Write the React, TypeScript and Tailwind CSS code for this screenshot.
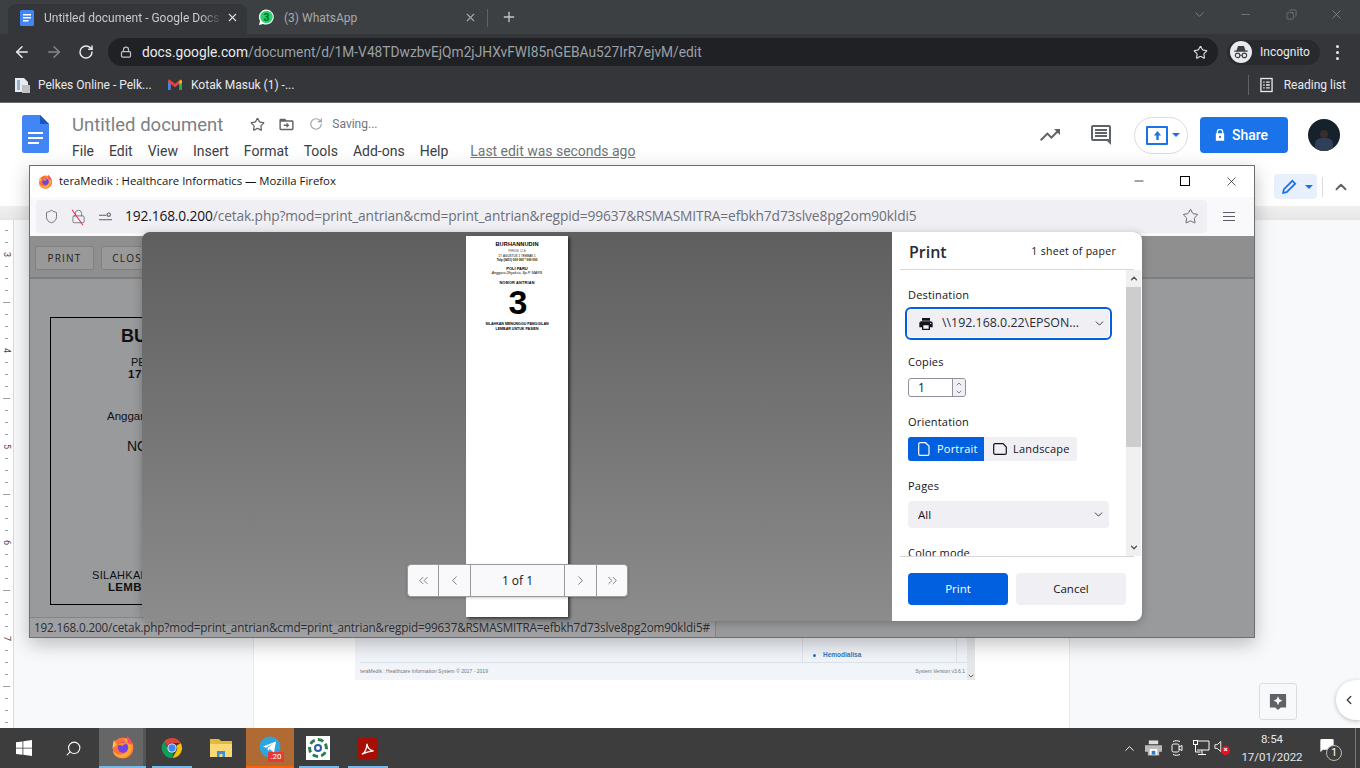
import { ArrowLeft, ArrowRight, RotateCw, Lock, Star, X, Minus, Plus, ChevronDown, ChevronUp, ChevronLeft, ChevronRight, ChevronsLeft, ChevronsRight, Shield, Copy, MessageSquare, Search } from 'lucide-react';

const menus = ['File', 'Edit', 'View', 'Insert', 'Format', 'Tools', 'Add-ons', 'Help'];
const statusUrl = '192.168.0.200/cetak.php?mod=print_antrian&cmd=print_antrian&regpid=99637&RSMASMITRA=efbkh7d73slve8pg2om90kldi5#';
const rulerCells = Array.from({ length: 42 }, (_, i) => i);
const rulerNumbers: Record<number, string> = { 2: '3', 10: '4', 18: '5', 26: '6', 34: '7' };

const DocsIcon = ({ className }: { className?: string }) => (
  <svg viewBox="0 0 27 38" className={className}>
    <path d="M2.5 0H18l9 9v26.5a2.5 2.5 0 0 1-2.5 2.5h-22A2.5 2.5 0 0 1 0 35.5V2.5A2.5 2.5 0 0 1 2.5 0z" fill="#4285f4" />
    <path d="M18 0l9 9h-9z" fill="#1a56c4" />
    <path d="M6 17h15v2H6zM6 22h15v2H6zM6 27h11v2H6z" fill="#fff" />
  </svg>
);

const FirefoxIcon = ({ className }: { className?: string }) => (
  <svg viewBox="0 0 24 24" className={className}>
    <circle cx="12" cy="13" r="10.5" fill="#ff7139" />
    <path d="M21.5 9C22.5 15 18 23 11 23 6 23 2.5 20 1.7 16c3 3 7 4 10.3 3 4-1.2 5.5-5 4.5-8.5-.7-2.5-2.5-5-4-7 3 0 7.5 1.5 9 5.5z" fill="#ffa436" />
    <path d="M16 1c2.500 2 5 5 5.500 9l-5-2z" fill="#ff4f5e" />
    <path d="M3 5C2 8 1.5 10 1.8 13l4-3z" fill="#ffbd4f" />
    <circle cx="12" cy="12.500" r="5.200" fill="#7542e5" />
    <path d="M7 10c2-2.500 6-3 9-1-2-.2-4 .5-4.500 2-.8-.8-2.800-1.200-4.500-1z" fill="#ff980e" />
  </svg>
);

const ChromeIcon = ({ className }: { className?: string }) => (
  <svg viewBox="0 0 24 24" className={className}>
    <path d="M12 1a11 11 0 0 1 9.530 5.500H12a5.500 5.500 0 0 0-5 3.200L3.400 5A11 11 0 0 1 12 1z" fill="#db4437" />
    <path d="M21.530 6.500A11 11 0 0 1 12.500 23l4.400-7.600A5.500 5.500 0 0 0 16.800 9.500z" fill="#f4c20d" />
    <path d="M12.500 23A11 11 0 0 1 3.400 5l4.700 8.500a5.500 5.500 0 0 0 5.500 3z" fill="#0f9d58" />
    <circle cx="12" cy="12" r="5" fill="#fff" />
    <circle cx="12" cy="12" r="4" fill="#4285f4" />
  </svg>
);

const WhatsAppIcon = () => (
  <svg viewBox="0 0 18 18" className="w-[17px] h-[17px] shrink-0">
    <path d="M9 .5a8 8 0 0 0-6.800 12.200L1 17l4.400-1.200A8 8 0 1 0 9 .5z" fill="#fff" />
    <circle cx="9" cy="8.500" r="6.600" fill="#25d366" />
    <text x="9" y="12.500" textAnchor="middle" fontSize="11" fontWeight="700" fill="#063" fontFamily="Roboto, sans-serif">3</text>
  </svg>
);

const TabBar = () => (
  <div className="h-[34px] bg-[#3c4043] flex items-end pl-[8px] shrink-0">
    <div className="w-[239px] h-[30px] bg-[#35363a] rounded-t-[8px] flex items-center pl-[12px] pr-[8px] pb-[3px]">
      <svg viewBox="0 0 14 16" className="w-[14px] h-[16px] shrink-0">
        <rect width="14" height="16" rx="1.5" fill="#4285f4" />
        <path d="M3 4h8v1.500H3zM3 7h8v1.500H3zM3 10h5.500v1.500H3z" fill="#fff" />
      </svg>
      <span className="ml-[10px] text-[12px] text-[#c8cacc] whitespace-nowrap overflow-hidden flex-1 [mask-image:linear-gradient(to_right,black_88%,transparent)]">Untitled document - Google Docs</span>
      <X size={13} strokeWidth={2} className="text-[#dadce0] ml-[4px] shrink-0" />
    </div>
    <div className="w-[235px] h-[30px] flex items-center pl-[11px] pr-[5px] pb-[3px]">
      <WhatsAppIcon />
      <span className="ml-[9px] text-[12px] text-[#a7a9ac]">(3) WhatsApp</span>
      <X size={13} strokeWidth={2} className="text-[#a7a9ac] ml-auto" />
    </div>
    <div className="ml-[5px] mb-[7px] w-px h-[18px] bg-[#5f6368]" />
    <Plus size={16} strokeWidth={2} className="ml-[13px] mb-[9px] text-[#c4c7c9]" />
    <div className="ml-auto flex items-center h-[30px] mb-[5px] text-[#9aa0a6]">
      <ChevronDown size={15} strokeWidth={1} className="mr-[32px]" />
      <Minus size={13} strokeWidth={1} className="mr-[34px]" />
      <Copy size={11} strokeWidth={1} className="mr-[32px] scale-x-[-1]" />
      <X size={15} strokeWidth={1} className="mr-[16px]" />
    </div>
  </div>
);

const Toolbar = () => (
  <div className="h-[34px] bg-[#35363a] flex items-center pt-[2px] shrink-0">
    <ArrowLeft size={18} strokeWidth={2} className="ml-[13px] text-[#e8eaed]" />
    <ArrowRight size={18} strokeWidth={2} className="ml-[14px] text-[#84878a]" />
    <RotateCw size={16} strokeWidth={2.2} className="ml-[15px] text-[#e8eaed]" />
    <div className="ml-[14px] w-[1110px] h-[28px] rounded-full bg-[#202124] flex items-center pl-[12px] pr-[10px]">
      <Lock size={12} strokeWidth={2.5} className="text-[#bdc1c6]" />
      <span className="ml-[10px] text-[13.75px] whitespace-nowrap text-[#e8eaed]">docs.google.com<span className="text-[#9aa0a6]">/document/d/1M-V48TDwzbvEjQm2jJHXvFWI85nGEBAu527IrR7ejvM/edit</span></span>
      <Star size={15} strokeWidth={1.8} className="ml-auto text-[#dadce0]" />
    </div>
    <div className="ml-[9px] w-[93px] h-[25px] rounded-full bg-[#292a2d] flex items-center pl-[3px]">
      <div className="w-[22px] h-[22px] rounded-full bg-[#e8eaed] flex items-center justify-center">
        <svg viewBox="0 0 24 24" className="w-[18px] h-[18px]" fill="#3c4043">
          <path d="M8 4h8l2 6h3v1.500H3V10h3z" />
          <circle cx="7.500" cy="16.500" r="3" fill="none" stroke="#3c4043" strokeWidth="1.5" />
          <circle cx="16.500" cy="16.500" r="3" fill="none" stroke="#3c4043" strokeWidth="1.5" />
          <path d="M10 15.800h4v1.200h-4z" />
        </svg>
      </div>
      <span className="ml-[8px] text-[12px] text-[#e8eaed]">Incognito</span>
    </div>
    <div className="ml-[16px] flex flex-col gap-[3px]">
      <div className="w-[3px] h-[3px] rounded-full bg-[#e8eaed]" />
      <div className="w-[3px] h-[3px] rounded-full bg-[#e8eaed]" />
      <div className="w-[3px] h-[3px] rounded-full bg-[#e8eaed]" />
    </div>
  </div>
);

const Bookmarks = () => (
  <div className="h-[35px] bg-[#35363a] border-b border-[#6b6c6e] flex items-center pl-[14px] pb-[1px] shrink-0">
    <svg viewBox="0 0 16 16" className="w-[16px] h-[16px]">
      <path d="M1 1h9l4 4v10H1z" fill="#e8eaed" />
      <path d="M3 3h3v10H3z" fill="#8ab4d8" />
      <path d="M8 8h8v8H8z" fill="#bdc1c6" />
    </svg>
    <span className="ml-[8px] w-[120px] text-[12px] text-[#e8eaed] whitespace-nowrap">Pelkes Online - Pelk...</span>
    <svg viewBox="0 0 16 12" className="ml-[10px] w-[14px] h-[11px]">
      <path d="M0 1.500L1.500 0 8 5l6.500-5L16 1.500V12h-3V5L8 9 3 5v7H0z" fill="#ea4335" />
      <path d="M0 3v9h3V5z" fill="#4285f4" />
      <path d="M13 5v7h3V3z" fill="#34a853" />
      <path d="M13 1.300L16 1.500V4l-3 2z" fill="#fbbc04" />
    </svg>
    <span className="ml-[9px] text-[12px] text-[#e8eaed] whitespace-nowrap">Kotak Masuk (1) -...</span>
    <div className="ml-auto w-px h-[20px] bg-[#5f6368]" />
    <svg viewBox="0 0 14 16" className="ml-[11px] w-[13px] h-[16px]" fill="none" stroke="#e8eaed" strokeWidth="1.4">
      <rect x="1" y="1" width="12" height="14" />
      <path d="M3.500 5h1.500M6.500 5h4M3.500 8h1.500M6.500 8h4M3.500 11h1.500M6.500 11h4" />
    </svg>
    <span className="ml-[11px] mr-[14px] text-[12px] text-[#e8eaed]">Reading list</span>
  </div>
);

const DocsHeader = () => (
  <div className="h-[64px] bg-white flex items-start pl-[22px] shrink-0">
    <DocsIcon className="w-[27px] h-[38px] mt-[12px]" />
    <div className="ml-[23px] pt-[8px]">
      <div className="flex items-center h-[26px]">
        <span className="text-[18.5px] text-[#7b7f84] pt-[3px]">Untitled document</span>
        <Star size={15} strokeWidth={2} className="ml-[27px] text-[#5f6368]" />
        <svg viewBox="0 0 24 24" className="ml-[13px] w-[17px] h-[17px]" fill="#5f6368">
          <path d="M20 6h-8l-2-2H4a2 2 0 0 0-2 2v12a2 2 0 0 0 2 2h16a2 2 0 0 0 2-2V8a2 2 0 0 0-2-2zm0 12H4V8h16zm-8-1l4-4-4-4v3H8v2h4z" />
        </svg>
        <RotateCw size={14} strokeWidth={2} className="ml-[14px] text-[#9aa0a6]" />
        <span className="ml-[9px] text-[12px] text-[#70757a]">Saving...</span>
      </div>
      <div className="flex items-center h-[24px] mt-[2px] text-[14px] text-[#3c4043]">
        {menus.map((m) => (
          <span key={m} className="mr-[15px]">{m}</span>
        ))}
        <span className="ml-[7px] underline text-[#70757a] tracking-[-0.03px]">Last edit was seconds ago</span>
      </div>
    </div>
    <div className="ml-auto flex items-center mt-[12px] pr-[20px]">
      <svg viewBox="0 0 24 24" className="w-[24px] h-[24px]" fill="#5f6368">
        <path d="M16 6l2.290 2.290-4.880 4.880-4-4L2 16.590 3.410 18l6-6 4 4 6.300-6.290L22 12V6z" />
      </svg>
      <svg viewBox="0 0 24 24" className="ml-[27px] w-[24px] h-[24px]" fill="#5f6368">
        <path d="M21.990 4a2 2 0 0 0-2-2H4a2 2 0 0 0-2 2v12a2 2 0 0 0 2 2h14l4 4zM20 16H4V4h16zM6 12h12v2H6zm0-3h12v2H6zm0-3h12v2H6z" />
      </svg>
      <div className="ml-[21px] w-[54px] h-[37px] rounded-full border border-[#dadce0] flex items-center pl-[11px]">
        <div className="w-[22px] h-[19px] border-[2px] border-[#1a73e8] flex items-center justify-center rounded-[1px]">
          <svg viewBox="0 0 10 10" className="w-[9px] h-[9px]" fill="#1a73e8"><path d="M5 0L9 5H6.300v5H3.700V5H1z" /></svg>
        </div>
        <div className="ml-[4px] border-x-[4px] border-t-[4px] border-x-transparent border-t-[#1a73e8]" />
      </div>
      <div className="ml-[12px] w-[88px] h-[36px] rounded-[4px] bg-[#1a73e8] flex items-center pl-[15px]">
        <svg viewBox="0 0 12 14" className="w-[10px] h-[12px]" fill="#fff"><path d="M2 5V3.500a4 4 0 0 1 8 0V5h1v9H1V5zm1.500 0h5V3.500a2.500 2.500 0 0 0-5 0zM6 8a1.300 1.300 0 1 0 0 2.600A1.300 1.300 0 0 0 6 8z" fillRule="evenodd" /></svg>
        <span className="ml-[7px] text-[14px] font-medium text-white">Share</span>
      </div>
      <div className="ml-[20px] w-[32px] h-[40px] flex items-center justify-center">
        <div className="w-[32px] h-[32px] rounded-full bg-[#15212b] flex flex-col items-center justify-end overflow-hidden">
          <div className="w-[8px] h-[8px] rounded-full bg-[#3a2e2a]" />
          <div className="w-[18px] h-[13px] rounded-t-[6px] bg-[#2f3f57]" />
        </div>
      </div>
    </div>
  </div>
);

const DocsToolbar = () => (
  <div className="h-[39px] bg-white flex items-center justify-end shrink-0 pr-[10px]">
    <div className="w-[43px] h-[25px] rounded-[4px] bg-[#e8f0fe] flex items-center pl-[7px]">
      <svg viewBox="0 0 24 24" className="w-[17px] h-[17px]" fill="none" stroke="#1a73e8" strokeWidth="2.5"><path d="M3 21l1-5L16 4l4 4L8 20z" /></svg>
      <div className="ml-[7px] border-x-[4px] border-t-[4px] border-x-transparent border-t-[#1a73e8]" />
    </div>
    <div className="ml-[5px] w-px h-[20px] bg-[#dadce0]" />
    <ChevronUp size={18} strokeWidth={2.5} className="ml-[9px] text-[#5f6368]" />
  </div>
);

const Ruler = () => (
  <div className="w-[14px] bg-white border-r border-[#dadce0] pt-[4px] overflow-hidden shrink-0">
    {rulerCells.map((i) => (
      <div key={i} className="h-[12px] flex items-center justify-center">
        {rulerNumbers[i] ? (
          <span className="rotate-90 text-[9px] text-[#5f3b3b] leading-none">{rulerNumbers[i]}</span>
        ) : (
          <div className={i % 8 === 6 ? 'w-[7px] h-px bg-[#9aa0a6]' : 'w-[3px] h-px bg-[#9aa0a6]'} />
        )}
      </div>
    ))}
  </div>
);

const DocsCanvas = () => (
  <div className="flex-1 flex flex-col min-h-0">
    <div className="h-[14px] bg-gradient-to-b from-[#f0f0f0] to-[#e6e6e6] shrink-0" />
    <div className="flex-1 flex min-h-0 bg-[#f8f9fa]">
      <Ruler />
      <div className="ml-[239px] w-[817px] bg-white border-x border-[#e8eaed] flex flex-col justify-end pb-[48px] pl-[101px]">
        <div className="w-[620px] h-[42px] bg-[#f1f4f9] flex font-['Liberation_Sans',sans-serif]">
          <div className="w-[612px] flex flex-col">
            <div className="flex-1 ml-[447px] w-[155px] border-x border-[#e0e4ea] flex items-center pl-[10px] pt-[10px]">
              <div className="w-[3px] h-[3px] rounded-full bg-[#2a6db5] mr-[7px]" />
              <span className="text-[6.5px] font-bold text-[#3a78b8]">Hemodialisa</span>
            </div>
            <div className="h-[18px] ml-[5px] border-t border-[#dde1e8] flex items-center justify-between pr-[2px] text-[5px] text-[#777]">
              <span>teraMedik : Healthcare Information System © 2017 - 2019</span>
              <span>System Version v3.6.1</span>
            </div>
          </div>
          <div className="w-[8px] bg-[#e6e7e9] flex flex-col justify-end items-center">
            <ChevronDown size={8} strokeWidth={3} className="text-[#666]" />
          </div>
        </div>
      </div>
      <div className="ml-auto flex flex-col justify-end items-end pb-[8px]">
        <div className="w-[38px] h-[37px] rounded-[3px] border border-[#dadce0] bg-[#f8f9fa] flex items-center justify-center mr-[63px]">
          <svg viewBox="0 0 20 22" className="w-[18px] h-[20px]">
            <path d="M1 2h18v15h-6l-3 3-3-3H1z" fill="#5f6368" />
            <path d="M10 4.500l1.500 3.500 3.500 1.500-3.500 1.500-1.500 3.500-1.500-3.500L5 9.500 8.500 8z" fill="#fff" />
          </svg>
        </div>
      </div>
    </div>
  </div>
);

const Taskbar = () => (
  <div className="h-[40px] bg-[#3d3d3d] shrink-0 flex items-stretch relative">
    <div className="w-[48px] flex items-center justify-center">
      <svg viewBox="0 0 16 16" className="w-[16px] h-[16px]" fill="#fff"><path d="M0 2.300l6.500-.9v6.300H0zM7.300 1.300L16 0v7.700H7.300zM0 8.500h6.500v6.300L0 14zM7.300 8.500H16V16l-8.700-1.200z" /></svg>
    </div>
    <div className="w-[51px] flex items-center justify-center">
      <Search size={17} strokeWidth={1.5} className="text-white scale-x-[-1]" />
    </div>
    <div className="w-[44px] bg-[#666] border-b-[2px] border-[#76b9ed] flex items-center justify-center pl-[4px]">
      <FirefoxIcon className="w-[24px] h-[24px]" />
    </div>
    <div className="w-[3px] bg-[#555] border-b-[2px] border-[#76b9ed]" />
    <div className="w-[6px]" />
    <div className="w-[40px] flex items-center justify-center relative">
      <ChromeIcon className="w-[22px] h-[22px]" />
      <div className="absolute bottom-0 left-0 right-0 h-[2px] bg-[#76b9ed]" />
    </div>
    <div className="w-[7px]" />
    <div className="w-[44px] flex items-center justify-center">
      <svg viewBox="0 0 22 20" className="w-[22px] h-[20px]">
        <path d="M0 1h9l2 2h11v16H0z" fill="#e8b838" />
        <path d="M0 6h22v13H0z" fill="#f9d976" />
        <path d="M7 13h8v6H7z" fill="#3a8fd8" />
        <path d="M9.500 16h3v3h-3z" fill="#f9d976" />
      </svg>
    </div>
    <div className="w-[3px]" />
    <div className="w-[48px] bg-[#b06a33] border-b-[2px] border-[#f7630c] flex items-center justify-center relative">
      <svg viewBox="0 0 22 22" className="w-[22px] h-[22px]">
        <circle cx="11" cy="11" r="10.5" fill="#2ca5e0" />
        <path d="M4 10.500L17 5.500l-2 11-4.500-3.500L9 15l-.5-3 6-4.500L7 11.700z" fill="#fff" />
      </svg>
      <span className="absolute left-[22px] top-[24px] w-[16px] h-[10px] bg-[#e53935] rounded-[1px] text-white text-[8px] leading-[10px] text-center">.20</span>
    </div>
    <div className="w-[48px] flex items-center justify-center relative">
      <div className="w-[24px] h-[24px] bg-white flex items-center justify-center">
        <div className="w-[20px] h-[20px] rounded-full border-[3px] border-dashed border-[#2a7f4f] flex items-center justify-center">
          <div className="w-[8px] h-[8px] rounded-full border-[2px] border-[#2a5db0]" />
        </div>
      </div>
      <div className="absolute bottom-0 left-[5px] right-[3px] h-[2px] bg-[#76b9ed]" />
    </div>
    <div className="w-[50px] flex items-center justify-center relative">
      <div className="w-[21px] h-[21px] rounded-[3px] bg-[#a80f04] flex items-center justify-center">
        <svg viewBox="0 0 16 16" className="w-[15px] h-[15px]" fill="none" stroke="#fff" strokeWidth="1.4"><path d="M2 14c3-1 5-6 5.500-11 .3 4 3 7 7 7.500-4 .2-8 1.500-12.500 3.500z" /></svg>
      </div>
      <div className="absolute bottom-0 left-[6px] right-[4px] h-[2px] bg-[#76b9ed]" />
    </div>

    <div className="ml-auto flex items-center text-white">
      <ChevronUp size={15} strokeWidth={1.5} className="mr-[8px]" />
      <svg viewBox="0 0 18 16" className="w-[17px] h-[16px] mr-[9px]"><path d="M4 0h10v4H4z" fill="#ddd" /><path d="M0 5h18v7h-3v4H3v-4H0z" fill="#bbb" /><path d="M5 9h8v6H5z" fill="#fff" /><path d="M7 11h4v4H7z" fill="#2a7fc8" /></svg>
      <svg viewBox="0 0 12 18" className="w-[12px] h-[18px] mr-[10px]" fill="none" stroke="#fff" strokeWidth="1"><rect x="1" y="5" width="7" height="8" rx="1.5" /><path d="M8 8l3-1.500v5L8 10M2 2.500c2-1 5-1 7 0M2 15.500c2 1 5 1 7 0" /></svg>
      <svg viewBox="0 0 17 16" className="w-[17px] h-[16px] mr-[4px]" fill="none" stroke="#fff" strokeWidth="1"><path d="M4 1h12v9H4M9 10v4M5 14.500h8" /><rect x=".5" y=".5" width="4" height="4" /><path d="M2.500 5v7h5" /></svg>
      <div className="relative w-[14px] h-[16px] mr-[11px]">
        <svg viewBox="0 0 10 14" className="w-[9px] h-[13px]" fill="none" stroke="#fff" strokeWidth="1"><path d="M1 5h2.500L7.500 1.500v11L3.500 9H1z" /></svg>
        <div className="absolute left-[7px] top-[6px] w-[9px] h-[9px] rounded-full bg-[#e81123] text-white text-[8px] leading-[8px] text-center font-bold">×</div>
      </div>
      <div className="w-[66px] flex flex-col items-center text-[11.5px] leading-[18px] text-[#e6e6e6]">
        <span>8:54</span>
        <span className="whitespace-nowrap">17/01/2022</span>
      </div>
      <div className="relative w-[24px] h-[24px] ml-[14px] mr-[17px]">
        <MessageSquare size={16} fill="#fff" strokeWidth={0} className="absolute left-[0px] top-[1px]" />
        <div className="absolute left-[7px] top-[9px] w-[16px] h-[16px] rounded-full bg-[#3d3d3d] border border-[#bbb] text-[11px] leading-[14px] text-center">1</div>
      </div>
    </div>
    <div className="absolute right-[4px] top-0 bottom-0 w-px bg-[#777]" />
  </div>
);

const PrintSidebar = () => (
  <div className="w-[250px] h-full bg-white rounded-r-[8px] flex flex-col shrink-0 text-[12px] text-[#15141a] font-['Open_Sans',sans-serif]">
    <div className="h-[38px] mx-[8px] border-b border-[#d7d7db] flex items-center justify-between pl-[9px] pr-[18px] pt-[2px] shrink-0">
      <span className="text-[16px] font-semibold text-[#2b2a33]">Print</span>
      <span className="text-[10.5px] tracking-[0.3px]">1 sheet of paper</span>
    </div>
    <div className="flex-1 min-h-0 flex">
      <div className="flex-1 min-w-0 overflow-hidden pl-[16px] pt-[17px]">
        <div className="text-[11px] leading-[16px] tracking-[0.2px]">Destination</div>
        <div className="mt-[4px] -ml-[3px] w-[207px] h-[33px] border-[2px] border-[#0060df] rounded-[6px] p-[1px]">
          <div className="h-full bg-[#f0f0f4] rounded-[3px] flex items-center pl-[10px] pr-[3px]">
            <svg viewBox="0 0 24 24" className="w-[16px] h-[16px]" fill="#15141a">
              <path d="M19 8H5c-1.660 0-3 1.340-3 3v6h4v4h12v-4h4v-6c0-1.660-1.340-3-3-3zm-3 11H8v-5h8v5zm3-7c-.55 0-1-.45-1-1s.45-1 1-1 1 .45 1 1-.45 1-1 1zm-1-9H6v4h12V3z" />
            </svg>
            <span className="ml-[8px] text-[12.4px] whitespace-nowrap text-[#2b2a33]">\\192.168.0.22\EPSON...</span>
            <ChevronDown size={13} strokeWidth={1.5} className="ml-auto" />
          </div>
        </div>
        <div className="mt-[14px] text-[11px] leading-[16px] tracking-[0.2px]">Copies</div>
        <div className="mt-[8px] w-[58px] h-[19px] border border-[#8f8f9d] rounded-[3px] flex items-center">
          <span className="ml-[9px] text-[12px] flex-1">1</span>
          <div className="w-[13px] h-full border-l border-[#8f8f9d] bg-[#f0f0f4] flex flex-col items-center justify-center rounded-r-[3px]">
            <ChevronUp size={8} strokeWidth={1.5} />
            <ChevronDown size={8} strokeWidth={1.5} />
          </div>
        </div>
        <div className="mt-[17px] text-[11px] leading-[16px] tracking-[0.2px]">Orientation</div>
        <div className="mt-[7px] w-[169px] h-[24px] rounded-[3px] bg-[#f0f0f4] flex text-[11px] tracking-[0.2px]">
          <div className="w-[76px] bg-[#0060df] rounded-l-[3px] text-white flex items-center pl-[10px]">
            <svg viewBox="0 0 12 14" className="w-[12px] h-[14px]" fill="none" stroke="#fff" strokeWidth="1.2"><path d="M2 .7h5.500L11 4v8a1.300 1.300 0 0 1-1.300 1.300H2A1.300 1.300 0 0 1 .7 12V2A1.300 1.300 0 0 1 2 .7z" /></svg>
            <span className="ml-[7px]">Portrait</span>
          </div>
          <div className="flex items-center pl-[9px]">
            <svg viewBox="0 0 14 12" className="w-[14px] h-[12px]" fill="none" stroke="#15141a" strokeWidth="1.2"><path d="M2 .7h8L13.300 4v6a1.300 1.300 0 0 1-1.300 1.300H2A1.300 1.300 0 0 1 .7 10V2A1.300 1.300 0 0 1 2 .7z" /></svg>
            <span className="ml-[6px]">Landscape</span>
          </div>
        </div>
        <div className="mt-[17px] text-[11px] leading-[16px] tracking-[0.2px]">Pages</div>
        <div className="mt-[7px] w-[201px] h-[27px] rounded-[4px] bg-[#f0f0f4] flex items-center pl-[10px] pr-[4px]">
          <span className="text-[11.5px]">All</span>
          <ChevronDown size={13} strokeWidth={1.5} className="ml-auto" />
        </div>
        <div className="mt-[17px] text-[11px] leading-[16px] tracking-[0.2px] whitespace-nowrap">Color mode</div>
      </div>
      <div className="w-[15px] mr-px flex flex-col items-center bg-[#f0f0f0] shrink-0">
        <ChevronUp size={10} strokeWidth={3} className="h-[17px] text-[#505050]" />
        <div className="w-full h-[160px] bg-[#cdcdcd]" />
        <ChevronDown size={10} strokeWidth={3} className="h-[17px] mt-auto text-[#505050]" />
      </div>
    </div>
    <div className="h-[65px] mx-[8px] pl-[8px] border-t border-[#d7d7db] pt-[16px] flex shrink-0 text-[11.5px]">
      <div className="w-[100px] h-[32px] rounded-[4px] bg-[#0060df] text-white flex items-center justify-center">Print</div>
      <div className="ml-[8px] w-[110px] h-[32px] rounded-[4px] bg-[#f0f0f4] flex items-center justify-center">Cancel</div>
    </div>
  </div>
);

const PreviewPage = () => (
  <div className="w-[102px] h-[381px] bg-white shadow-[2px_2px_3px_rgba(0,0,0,0.6)] flex flex-col items-center pt-[6px] text-black font-['Liberation_Sans',sans-serif] leading-none text-center">
    <div className="text-[5.6px] font-bold h-[6px] tracking-[0.1px]">BURHANNUDIN</div>
    <div className="text-[2.8px] mt-[2px] h-[3px] text-[#555]">PERUM. 12 A</div>
    <div className="text-[3px] mt-[2px] h-[3px]">17. AGUSTUS 1 TEMBAK 1</div>
    <div className="text-[3px] font-bold mt-[1px] h-[3px]">Telp (0411) 000 000 * 000 000</div>
    <div className="text-[4px] font-bold mt-[5px] h-[4px]">POLI PARU</div>
    <div className="text-[3.6px] italic mt-[1px] h-[4px] font-medium">Anggara Dhyaksa, Sp.P, MARS</div>
    <div className="text-[3.8px] font-semibold mt-[6px] h-[4px] tracking-[0.2px]">NOMOR ANTRIAN</div>
    <div className="text-[34px] font-bold -mt-[1px] ml-[2px]">3</div>
    <div className="text-[3.6px] font-bold mt-[4px] h-[4px]">SILAHKAN MENUNGGU PANGGILAN</div>
    <div className="text-[3.6px] font-bold mt-[1px] h-[4px]">LEMBAR UNTUK PASIEN</div>
  </div>
);

const PrintDialog = () => (
  <div className="absolute left-[112px] top-[66px] w-[1000px] h-[389px] rounded-[8px] flex shadow-[0_2px_10px_rgba(0,0,0,0.25)] bg-gradient-to-b from-[#5f5f5f] to-[#8c8c8c]">
    <div className="flex-1 relative flex justify-center pt-[4px]">
      <PreviewPage />
      <div className="absolute left-[265px] top-[332px] w-[221px] h-[33px] rounded-[4px] bg-[#f9f9fb] border border-[#9a9a9a] flex items-center text-[#555] shadow-[0_1px_3px_rgba(0,0,0,0.2)]">
        <div className="w-[31px] h-full flex items-center justify-center border-r border-[#999]"><ChevronsLeft size={15} strokeWidth={1.2} /></div>
        <div className="w-[32px] h-full flex items-center justify-center border-r border-[#999]"><ChevronLeft size={15} strokeWidth={1.2} /></div>
        <div className="w-[94px] h-full flex items-center justify-center border-r border-[#999] text-[12px] text-[#15141a] font-['Open_Sans',sans-serif]">1 of 1</div>
        <div className="w-[32px] h-full flex items-center justify-center border-r border-[#999]"><ChevronRight size={15} strokeWidth={1.2} /></div>
        <div className="flex-1 h-full flex items-center justify-center"><ChevronsRight size={15} strokeWidth={1.2} /></div>
      </div>
    </div>
    <PrintSidebar />
  </div>
);

const DimmedPage = () => (
  <div className="flex-1 min-h-0 bg-[#999a9c] flex flex-col font-['Liberation_Sans',sans-serif] relative">
    <div className="h-[43px] bg-[#8f8f8f] border-b-[2px] border-[#7f7f7f] flex items-center pl-[5px] pt-[3px] shrink-0">
      <div className="w-[59px] h-[24px] border border-[#808080] bg-[#999] rounded-[2px] flex items-center justify-center text-[10px] tracking-[1.2px] text-[#222] font-['Open_Sans',sans-serif]">PRINT</div>
      <div className="ml-[7px] w-[59px] h-[24px] border border-[#808080] bg-[#999] rounded-[2px] flex items-center justify-center text-[10px] tracking-[1.2px] text-[#222] font-['Open_Sans',sans-serif]">CLOSE</div>
    </div>
    <div className="ml-[20px] mt-[38px] w-[250px] h-[288px] border border-black text-[#111] leading-none overflow-hidden whitespace-nowrap">
      <div className="mt-[9px] pl-[70px] text-[18px] font-bold">BURHANNUDIN</div>
      <div className="mt-[12px] pl-[80px] text-[11px]">PERUM</div>
      <div className="mt-[1px] pl-[77px] text-[11.5px] font-bold tracking-[0.5px]">17. AGUSTUS</div>
      <div className="mt-[30px] pl-[56px] text-[11.5px]">Anggara</div>
      <div className="mt-[17px] pl-[76px] text-[14px]">NOMOR</div>
      <div className="mt-[117px] pl-[41px] text-[11px] font-medium tracking-[0.3px]">SILAHKAN MENUNGGU</div>
      <div className="mt-[1px] pl-[57px] text-[11.5px] font-bold tracking-[0.3px]">LEMBAR UNTUK</div>
    </div>
    <div className="mt-auto h-[20px] w-[686px] bg-[#a0a0a2] border-r border-t border-[#858585] flex items-center pl-[4px] text-[11.7px] text-[#2e2e30] font-['Open_Sans',sans-serif] whitespace-nowrap overflow-hidden shrink-0">
      <span className="tracking-[-0.15px]">{statusUrl}</span>
    </div>
  </div>
);

const FirefoxWindow = () => (
  <div className="absolute left-[29px] top-[165px] w-[1226px] h-[473px] bg-white border border-[#6e6e6e] shadow-[0_6px_18px_rgba(0,0,0,0.25)] flex flex-col font-['Open_Sans',sans-serif]">
    <div className="h-[31px] bg-white flex items-center pl-[8px] pb-[1px] shrink-0">
      <FirefoxIcon className="w-[15px] h-[15px]" />
      <span className="ml-[6px] text-[11.35px] text-[#15141a]">teraMedik : Healthcare Informatics — Mozilla Firefox</span>
      <Minus size={14} strokeWidth={1.2} className="ml-auto mr-[34px] text-black" />
      <div className="w-[10px] h-[10px] border border-black mr-[34px]" />
      <X size={15} strokeWidth={1} className="mr-[15px] text-black" />
    </div>
    <div className="h-[39px] bg-[#f9f9fb] flex items-center pl-[6px] shrink-0">
      <div className="w-[1171px] h-[33px] rounded-[4px] bg-[#f0f0f4] flex items-center pl-[8px] pr-[8px]">
        <Shield size={15} strokeWidth={1.3} className="text-[#5b5b66]" />
        <div className="relative ml-[12px] w-[14px] h-[16px]">
          <Lock size={15} strokeWidth={1.2} className="text-[#5b5b66]" />
          <div className="absolute left-[6px] -top-[1px] w-px h-[19px] bg-[#e22850] -rotate-[35deg]" />
        </div>
        <svg viewBox="0 0 14 10" className="ml-[14px] w-[13px] h-[10px]" fill="none" stroke="#5b5b66" strokeWidth="1.1"><path d="M0 3h8M0 8h14" /><circle cx="10.500" cy="2.500" r="1.800" /></svg>
        <span className="ml-[13px] text-[13.75px] whitespace-nowrap text-[#15141a] tracking-[-0.13px]">192.168.0.200<span className="text-[#6f6f78]">/cetak.php?mod=print_antrian&amp;cmd=print_antrian&amp;regpid=99637&amp;RSMASMITRA=efbkh7d73slve8pg2om90kldi5</span></span>
        <Star size={17} strokeWidth={1.3} className="ml-auto text-[#5b5b66]" />
      </div>
      <div className="ml-[16px] flex flex-col gap-[3px]">
        <div className="w-[12px] h-px bg-[#5b5b66]" />
        <div className="w-[12px] h-px bg-[#5b5b66]" />
        <div className="w-[12px] h-px bg-[#5b5b66]" />
      </div>
    </div>
    <DimmedPage />
    <PrintDialog />
  </div>
);

export default function App() {
  return (
    <div className="relative h-[768px] w-[1360px] overflow-hidden flex flex-col bg-white font-['Roboto',sans-serif]">
      <TabBar />
      <Toolbar />
      <Bookmarks />
      <DocsHeader />
      <DocsToolbar />
      <DocsCanvas />
      <Taskbar />
      <div className="absolute right-0 top-[680px] w-[24px] h-[40px] rounded-l-full bg-white shadow-[0_1px_4px_rgba(0,0,0,0.25)] flex items-center pl-[6px]">
        <ChevronLeft size={14} strokeWidth={2.5} className="text-[#444]" />
      </div>
      <FirefoxWindow />
    </div>
  );
}
